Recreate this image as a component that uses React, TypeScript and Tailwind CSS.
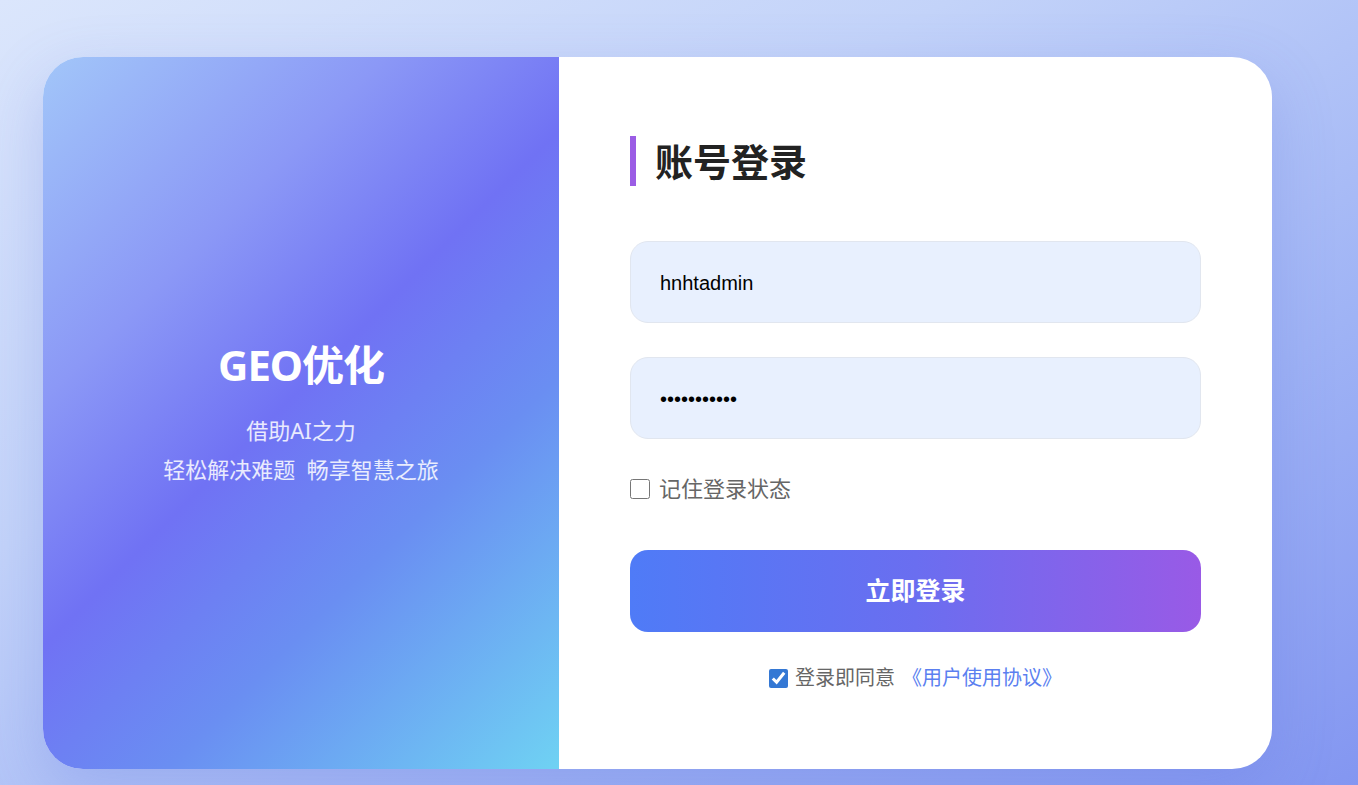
import { useState } from 'react';

export default function App() {
  const [username, setUsername] = useState('hnhtadmin');
  const [password, setPassword] = useState('hnht@123456');
  const [remember, setRemember] = useState(false);
  const [agreed, setAgreed] = useState(true);

  return (
    <div
      className="min-h-screen w-full overflow-hidden bg-[linear-gradient(150deg,#dbe6fc_0%,#c3d3f9_35%,#9fb3f5_70%,#8396f1_100%)] pt-[57px] pl-[43px] pb-[16px]"
      style={{ fontFamily: '"Noto Sans", "Noto Sans CJK SC", sans-serif' }}
    >
      <div className="flex w-[1229px] h-[712px] rounded-[40px] overflow-hidden bg-white shadow-[0_20px_60px_rgba(90,110,220,0.25)]">
        {/* Brand panel */}
        <div className="flex w-[516px] shrink-0 flex-col items-center justify-center bg-[linear-gradient(135deg,#a2c6f9_0%,#8b98f6_28%,#7072f4_48%,#6a8ef2_68%,#6fd2f3_100%)] pt-[6px] text-white">
          <h1 className="text-[42px] font-bold leading-none tracking-tight">GEO优化</h1>
          <p className="mt-[25px] text-[22px] leading-[39px] text-white/85">借助AI之力</p>
          <p className="text-[22px] leading-[39px] text-white/85 whitespace-pre">轻松解决难题  畅享智慧之旅</p>
        </div>

        {/* Login form */}
        <div className="flex-1 px-[71px] pt-[79px]">
          <div className="flex items-center gap-[19px]">
            <span className="block h-[50px] w-[6px] bg-[#9b5de5]" />
            <h2 className="text-[38px] font-bold leading-none text-[#222]">账号登录</h2>
          </div>

          <form className="mt-[55px] flex flex-col" onSubmit={(e) => e.preventDefault()}>
            <input
              type="text"
              value={username}
              onChange={(e) => setUsername(e.target.value)}
              className="h-[82px] w-full rounded-[18px] border border-[#e1e6ef] bg-[#e8f0fe] px-[29px] pt-[3px] text-[20px] text-black outline-none"
              style={{ fontFamily: '"Liberation Sans", Arial, sans-serif' }}
            />
            <input
              type="password"
              value={password}
              onChange={(e) => setPassword(e.target.value)}
              className="mt-[34px] h-[82px] w-full rounded-[18px] border border-[#e1e6ef] bg-[#e8f0fe] px-[29px] pt-[3px] text-[20px] text-black outline-none"
              style={{ fontFamily: '"Liberation Sans", Arial, sans-serif' }}
            />

            <label className="mt-[33px] flex items-center gap-[9px] text-[22px] text-[#666] cursor-pointer">
              <input
                type="checkbox"
                checked={remember}
                onChange={(e) => setRemember(e.target.checked)}
                className="h-[20px] w-[20px] m-0"
              />
              记住登录状态
            </label>

            <button
              type="submit"
              className="mt-[45px] h-[82px] w-full rounded-[18px] bg-[linear-gradient(90deg,#4f7bf7_0%,#6a6ef0_50%,#995ae6_100%)] text-[25px] font-bold text-white"
            >
              立即登录
            </button>

            <div className="mt-[31px] flex items-center justify-center gap-[7px] text-[20px] text-[#666]">
              <input
                type="checkbox"
                checked={agreed}
                onChange={(e) => setAgreed(e.target.checked)}
                className="h-[19px] w-[19px] m-0 accent-[#3478d4]"
              />
              <span>登录即同意</span>
              <a href="#" className="text-[#5b7ff0]">《用户使用协议》</a>
            </div>
          </form>
        </div>
      </div>
    </div>
  );
}
